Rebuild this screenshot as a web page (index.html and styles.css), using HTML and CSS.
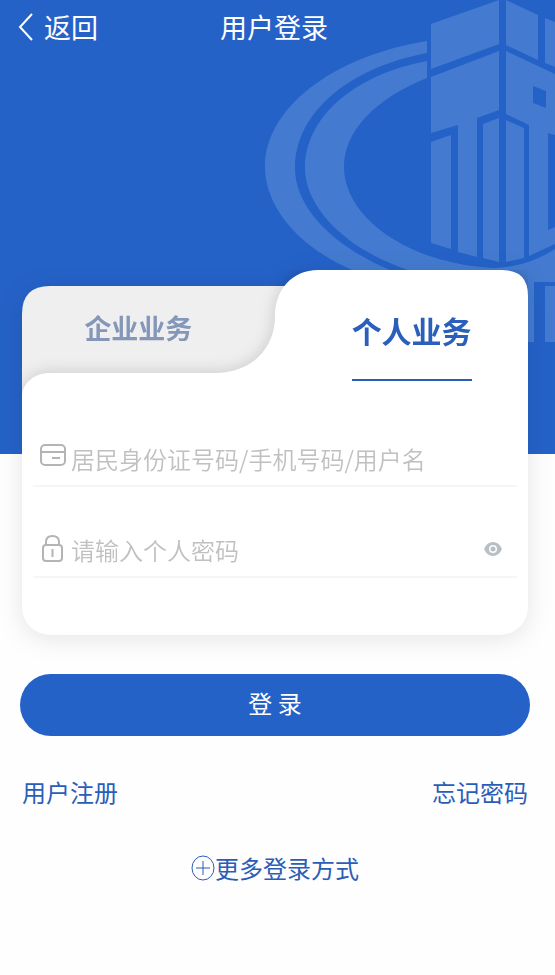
FILE: index.html
```html
<!DOCTYPE html>
<html lang="zh-CN">
<head>
    <meta charset="UTF-8">
    <meta name="viewport" content="width=device-width, initial-scale=1.0">
    <title>用户登录</title>
    <link rel="stylesheet" href="styles.css">
</head>
<body>
    <!-- Blue header area -->
    <header class="hero">
        <svg class="hero-logo" width="300" height="342" viewBox="0 0 300 342" aria-hidden="true">
            <!-- Rings -->
            <path d="M172 41C78 56 10 108 10 167C10 206 42 246 97 270L97 342H300V286H290V342H279V282H300V249C281 261 263 267 238 268C150 263 89 216 89 167C89 132 119 99 172 78V61C98 75 50 118 50 168C50 207 90 249 153 270H135C78 246 40 208 40 168C40 114 92 68 172 53Z"/>
            <!-- Building -->
            <path d="M176 24L244 0V44L176 69Z"/>
            <path d="M251 0L283 15V60L251 45Z"/>
            <path d="M290 18L300 22V67L290 63Z"/>
            <path d="M176 77L244 51V110L222 118V257L203 252V125L176 133Z"/>
            <path fill-rule="evenodd" d="M251 51L300 74V135L293 133V230L300 227V244L274 256V125L251 114ZM278 86V103L291 108V91Z"/>
            <path d="M176 142L196 135V249L176 243Z"/>
            <path d="M228 124L244 118V262L228 258Z"/>
            <path d="M251 120L269 128V258L251 262Z"/>
        </svg>
        <nav class="nav-bar">
            <a class="back-link" href="#">
                <svg width="16" height="28" viewBox="0 0 16 28" aria-hidden="true">
                    <path d="M14 1L2 14L14 27"/>
                </svg>
                返回
            </a>
            <h1 class="page-title">用户登录</h1>
        </nav>
    </header>

    <main class="login">
        <form class="login-form">
            <div class="card">
                <!-- Tab shapes -->
                <svg class="tab-shape" viewBox="0 0 506 130" preserveAspectRatio="none" aria-hidden="true">
                    <defs>
                        <clipPath id="tabClip">
                            <path d="M0 130V44Q0 16 28 16H253V0H506V130Z"/>
                        </clipPath>
                    </defs>
                    <path class="tab-back" d="M0 130V44Q0 16 28 16H290V130Z"/>
                    <g clip-path="url(#tabClip)">
                        <path class="tab-front" d="M0 131V128C0 113 12 103 28 103H193C230 103 253 78 253 46C253 20 270 0 296 0H480Q506 0 506 26V131Z"/>
                    </g>
                </svg>
                <div class="tabs">
                    <button class="tab" type="button">企业业务</button>
                    <button class="tab active" type="button">个人业务</button>
                </div>
                <div class="fields">
                    <div class="field">
                        <label for="account" aria-label="账号">
                            <svg width="26" height="28" viewBox="0 0 26 28">
                                <rect x="1" y="1" width="24" height="20" rx="4"/>
                                <path d="M1 8H25M12 14H20"/>
                            </svg>
                        </label>
                        <input type="text" id="account" placeholder="居民身份证号码/手机号码/用户名">
                    </div>
                    <div class="field">
                        <label for="password" aria-label="密码">
                            <svg width="26" height="28" viewBox="0 0 26 28">
                                <rect x="3" y="10" width="19" height="16" rx="3"/>
                                <path d="M6 10V7Q6 1 12.500 1Q19 1 19 7V10M12.500 14V22"/>
                            </svg>
                        </label>
                        <input type="password" id="password" placeholder="请输入个人密码">
                        <button class="eye-button" type="button" aria-label="显示密码">
                            <svg width="18" height="14" viewBox="0 0 18 14">
                                <path fill-rule="evenodd" d="M0 7Q3 0 9 0Q15 0 18 7Q15 14 9 14Q3 14 0 7ZM9 3A4 4 0 1 0 9 11A4 4 0 1 0 9 3Z"/>
                                <circle cx="9" cy="7" r="2.500"/>
                            </svg>
                        </button>
                    </div>
                </div>
            </div>
            <button class="login-button" type="submit">登 录</button>
        </form>

        <div class="links">
            <a href="#">用户注册</a>
            <a href="#">忘记密码</a>
        </div>
        <a class="more-link" href="#">
            <svg width="24" height="26" viewBox="0 0 24 26" aria-hidden="true">
                <ellipse cx="12" cy="13" rx="11" ry="12"/>
                <path d="M5 13H19M12 6V20"/>
            </svg>
            更多登录方式
        </a>
    </main>
</body>
</html>
```
FILE: styles.css
```css
* {
    box-sizing: border-box;
    margin: 0;
    padding: 0;
}

body {
    font-family: "Noto Sans CJK SC", sans-serif;
    font-size: 24px;
    background: #fefefe;
    color: #2a5db8;
}

a {
    color: inherit;
    text-decoration: none;
}

button,
input {
    font: inherit;
    border: none;
    background: none;
}

button {
    cursor: pointer;
}

svg {
    display: block;
    flex: none;
}

/* Header */
.hero {
    position: relative;
    min-height: 454px;
    background: #2562c8;
    overflow: hidden;
}

.hero-logo {
    position: absolute;
    top: 0;
    right: 0;
    fill: #447bd0;
}

.nav-bar {
    position: relative;
    display: grid;
    grid-template-columns: 1fr auto 1fr;
    align-items: center;
    height: 53px;
    padding: 0 25px 0 18px;
    color: #ffffff;
}

.back-link {
    display: flex;
    align-items: center;
    gap: 10px;
    font-size: 27px;
}

.back-link svg {
    fill: none;
    stroke: #ffffff;
    stroke-width: 2;
}

.page-title {
    font-size: 27px;
    font-weight: 400;
}

/* Login card */
.login {
    position: relative;
    margin-top: -184px;
    padding: 0 25px 40px 20px;
}

.card {
    position: relative;
    margin: 0 2px;
    padding-bottom: 57px;
    border-radius: 28px;
    background: linear-gradient(#ffffff, #ffffff) 0 128px no-repeat;
    filter: drop-shadow(0 4px 12px rgba(0, 0, 0, 0.1));
}

.tab-shape {
    position: absolute;
    top: 0;
    left: 0;
    width: 100%;
    height: 130px;
}

.tab-back {
    fill: #efefef;
}

.tab-front {
    fill: #ffffff;
    filter: drop-shadow(0 0 8px rgba(0, 0, 0, 0.16));
}

.tabs {
    position: relative;
    display: flex;
    justify-content: space-between;
    height: 126px;
    padding-bottom: 15px;
}

.tab {
    position: relative;
    width: 46%;
    padding-top: 4px;
    font-size: 27px;
    font-weight: 700;
    color: #8497b8;
}

.tab.active {
    padding-top: 8px;
    font-size: 30px;
    color: #2a5fbb;
}

.tab.active::after {
    content: "";
    position: absolute;
    bottom: 0;
    left: 50%;
    width: 120px;
    height: 2px;
    margin-left: -60px;
    background: #2a5eb5;
}

.fields {
    position: relative;
    padding: 0 11px;
}

.field {
    display: flex;
    align-items: center;
    gap: 5px;
    height: 91px;
    padding: 37px 15px 2px 7px;
    border-bottom: 2px solid #f6f6f6;
}

.field label svg {
    fill: none;
    stroke: #b4b4b4;
    stroke-width: 2;
}

.field input {
    flex: 1;
    min-width: 0;
    height: 50px;
    font-weight: 350;
    color: #333333;
    outline: none;
}

.field input::placeholder {
    color: #c0c0c0;
    opacity: 1;
}

.eye-button svg {
    fill: #b8bfc5;
}

.login-button {
    display: block;
    width: 100%;
    height: 62px;
    margin-top: 39px;
    padding-bottom: 5px;
    border-radius: 31px;
    background: #2562c8;
    color: #ffffff;
}

/* Links */
.links {
    display: flex;
    justify-content: space-between;
    margin-top: 38px;
    padding: 0 2px;
    line-height: 36px;
}

.more-link {
    display: flex;
    justify-content: center;
    align-items: center;
    margin-top: 40px;
    line-height: 36px;
}

.more-link svg {
    fill: none;
    stroke: #2a5db8;
    stroke-width: 1;
}
```
